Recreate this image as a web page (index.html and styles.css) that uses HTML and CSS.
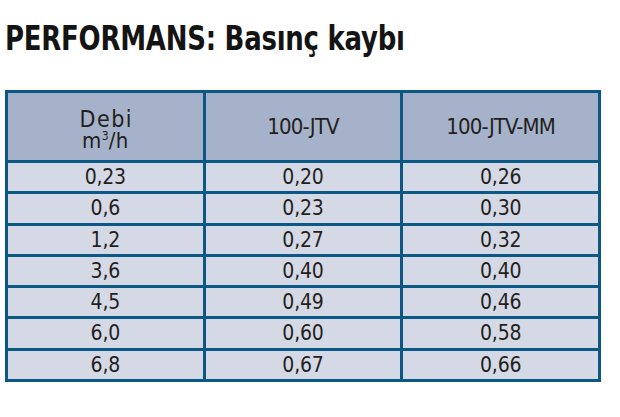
FILE: index.html
```html
<!DOCTYPE html>
<html lang="tr">
<head>
<meta charset="utf-8">
<link rel="stylesheet" href="styles.css">
</head>
<body>
<h1 class="title">PERFORMANS: Basınç kaybı</h1>
<table class="perf">
  <thead>
    <tr>
      <th><div class="unit"><span class="l1">Debi</span><span class="l2">m<sup>3</sup>/h</span></div></th>
      <th>100-JTV</th>
      <th>100-JTV-MM</th>
    </tr>
  </thead>
  <tbody>
    <tr><td>0,23</td><td>0,20</td><td>0,26</td></tr>
    <tr><td>0,6</td><td>0,23</td><td>0,30</td></tr>
    <tr><td>1,2</td><td>0,27</td><td>0,32</td></tr>
    <tr><td>3,6</td><td>0,40</td><td>0,40</td></tr>
    <tr><td>4,5</td><td>0,49</td><td>0,46</td></tr>
    <tr><td>6,0</td><td>0,60</td><td>0,58</td></tr>
    <tr><td>6,8</td><td>0,67</td><td>0,66</td></tr>
  </tbody>
</table>
</body>
</html>
```
FILE: styles.css
```css
html, body {
  margin: 0;
  padding: 0;
  background: #ffffff;
}
body {
  padding: 0 0 0 5px;
  font-family: "DejaVu Sans Condensed", "DejaVu Sans", sans-serif;
  font-stretch: condensed;
  color: #231f20;
}
.title {
  margin: 21px 0 35px 0;
  font-family: "DejaVu Sans Condensed", "DejaVu Sans", sans-serif;
  font-weight: bold;
  font-size: 34px;
  line-height: 34px;
  letter-spacing: -0.3px;
  color: #141414;
  white-space: nowrap;
  transform: scaleX(0.85);
  transform-origin: left center;
}
.perf {
  border-collapse: collapse;
  border: 3px solid #0b5884;
  width: 596px;
  table-layout: fixed;
}
.perf th, .perf td {
  border: 3px solid #0b5884;
  text-align: center;
  padding: 0;
  font-weight: normal;
}
.perf th {
  background: #a6b2c9;
  height: 67px;
  font-size: 22px;
  letter-spacing: -0.9px;
}
.perf td {
  background: #d5d9e5;
  height: 28.25px;
  font-size: 21px;
  line-height: 24px;
  letter-spacing: -0.2px;
}
.unit {
  margin-top: 6px;
}
.l1, .l2 {
  display: block;
  line-height: 22px;
}
.l1 {
  font-size: 23px;
  letter-spacing: 1.5px;
  padding-left: 2px;
}
.l2 {
  font-size: 22px;
  letter-spacing: 0.3px;
}
sup {
  font-size: 12px;
  vertical-align: 8px;
  line-height: 0;
}
```
